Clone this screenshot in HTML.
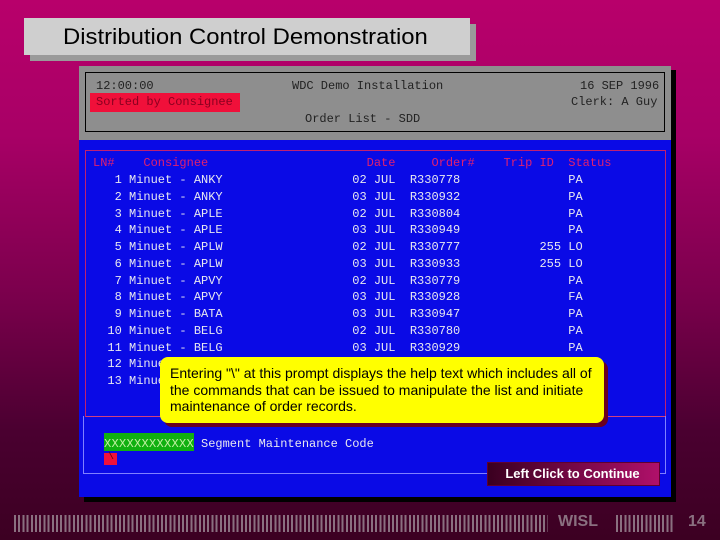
<!DOCTYPE html>
<html><head><style>
*{margin:0;padding:0}
body{width:720px;height:540px;overflow:hidden;position:relative;background:linear-gradient(to bottom,#b8006b 0%,#a80066 25%,#7a004c 55%,#4a0030 80%,#3c0022 100%);font-family:"Liberation Sans",sans-serif}
.a{position:absolute}
.m{font-family:"Liberation Mono",monospace;font-size:12px;white-space:pre;line-height:16.75px}
.bars{background:repeating-linear-gradient(to right,#8a7080 0 2px,transparent 2px 4.2px);height:17px;top:515px}
</style></head><body>
<div class="a" style="left:30px;top:24px;width:446px;height:37px;background:#9a9a9a"></div>
<div class="a" style="left:24px;top:18px;width:446px;height:37px;background:#cfcfcf"></div>
<div class="a" style="left:63px;top:24px;font-size:22px;color:#000;transform:scaleX(1.085);transform-origin:left top">Distribution Control Demonstration</div>

<div class="a" style="left:84px;top:70px;width:592px;height:432px;background:#000"></div>
<div class="a" style="left:79px;top:66px;width:592px;height:74px;background:#8e8e8e"></div>
<div class="a" style="left:85px;top:72px;width:578px;height:58px;border:1px solid #000"></div>
<div class="a" style="left:90px;top:93px;width:150px;height:19px;background:#f0103a"></div>
<div class="a m" style="left:96px;top:78px;color:#222">12:00:00</div>
<div class="a m" style="left:292px;top:78px;color:#222">WDC Demo Installation</div>
<div class="a m" style="left:580px;top:78px;color:#222">16 SEP 1996</div>
<div class="a m" style="left:571px;top:94px;color:#222">Clerk: A Guy</div>
<div class="a m" style="left:96px;top:94px;color:#8a0020">Sorted by Consignee</div>
<div class="a m" style="left:305px;top:111px;color:#222">Order List - SDD</div>

<div class="a" style="left:79px;top:140px;width:592px;height:357px;background:#0a0ae6"></div>
<div class="a" style="left:85px;top:150px;width:579px;height:265px;border:1px solid #c02070;border-bottom:1px solid #d04080"></div>
<div class="a" style="left:83px;top:416px;width:581px;height:57px;border:1px solid #8080ff;border-top:none"></div>

<div class="a m" style="left:93px;top:155px;color:#e02070">LN#    Consignee                      Date     Order#    Trip ID  Status</div>
<div class="a m" style="left:93px;top:172px;color:#e8e8f0">   1 Minuet - ANKY                  02 JUL  R330778               PA
   2 Minuet - ANKY                  03 JUL  R330932               PA
   3 Minuet - APLE                  02 JUL  R330804               PA
   4 Minuet - APLE                  03 JUL  R330949               PA
   5 Minuet - APLW                  02 JUL  R330777           255 LO
   6 Minuet - APLW                  03 JUL  R330933           255 LO
   7 Minuet - APVY                  02 JUL  R330779               PA
   8 Minuet - APVY                  03 JUL  R330928               FA
   9 Minuet - BATA                  03 JUL  R330947               PA
  10 Minuet - BELG                  02 JUL  R330780               PA
  11 Minuet - BELG                  03 JUL  R330929               PA
  12 Minuet
  13 Minuet</div>

<div class="a" style="left:164px;top:361px;width:444px;height:66px;background:#6a0020;border-radius:8px"></div>
<div class="a" style="left:160px;top:357px;width:444px;height:66px;background:#ffff00;border-radius:8px"></div>
<div class="a" style="left:170px;top:365px;width:428px;font-size:14px;line-height:16.5px;color:#000">Entering "\" at this prompt displays the help text which includes all of the commands that can be issued to manipulate the list and initiate maintenance of order records.</div>

<div class="a" style="left:104px;top:433px;width:90px;height:18px;background:#10b010"></div>
<div class="a m" style="left:104px;top:436px;color:#c0f0a0;font-size:12px;letter-spacing:0.3px">XXXXXXXXXXXX</div>
<div class="a m" style="left:201px;top:436px;color:#e8e8f0">Segment Maintenance Code</div>
<div class="a" style="left:104px;top:453px;width:13px;height:12px;background:#f0103a"></div>
<div class="a m" style="left:108px;top:450px;color:#600;font-size:10px">\</div>

<div class="a" style="left:487px;top:462px;width:173px;height:24px;background:linear-gradient(to right,#3a0020,#b0106a);border:1px solid #600030;box-sizing:border-box"></div>
<div class="a" style="left:487px;top:466px;width:171px;text-align:center;color:#fff;font-weight:bold;font-size:13px">Left Click to Continue</div>

<div class="a bars" style="left:14px;width:534px"></div>
<div class="a" style="left:558px;top:513px;color:#8a7080;font-weight:bold;font-size:16px">WISL</div>
<div class="a bars" style="left:616px;width:58px"></div>
<div class="a" style="left:688px;top:513px;color:#8a7080;font-weight:bold;font-size:16px">14</div>
</body></html>
